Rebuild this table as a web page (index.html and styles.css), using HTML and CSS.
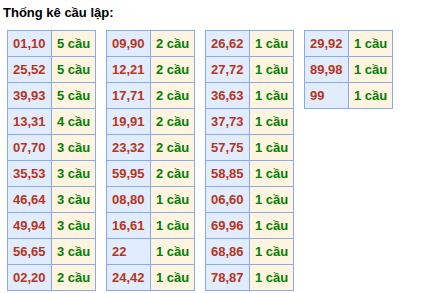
FILE: index.html
```html
<!DOCTYPE html>
<html lang="vi">
<head>
<meta charset="utf-8">
<link rel="stylesheet" href="styles.css">
</head>
<body>
<div class="page">
  <div class="title">Thống kê cầu lập:</div>
  <div class="tables">
    <table class="stat">
      <tr><td class="num">01,10</td><td class="cnt">5 cầu</td></tr>
      <tr><td class="num">25,52</td><td class="cnt">5 cầu</td></tr>
      <tr><td class="num">39,93</td><td class="cnt">5 cầu</td></tr>
      <tr><td class="num">13,31</td><td class="cnt">4 cầu</td></tr>
      <tr><td class="num">07,70</td><td class="cnt">3 cầu</td></tr>
      <tr><td class="num">35,53</td><td class="cnt">3 cầu</td></tr>
      <tr><td class="num">46,64</td><td class="cnt">3 cầu</td></tr>
      <tr><td class="num">49,94</td><td class="cnt">3 cầu</td></tr>
      <tr><td class="num">56,65</td><td class="cnt">3 cầu</td></tr>
      <tr><td class="num">02,20</td><td class="cnt">2 cầu</td></tr>
    </table>
    <table class="stat">
      <tr><td class="num">09,90</td><td class="cnt">2 cầu</td></tr>
      <tr><td class="num">12,21</td><td class="cnt">2 cầu</td></tr>
      <tr><td class="num">17,71</td><td class="cnt">2 cầu</td></tr>
      <tr><td class="num">19,91</td><td class="cnt">2 cầu</td></tr>
      <tr><td class="num">23,32</td><td class="cnt">2 cầu</td></tr>
      <tr><td class="num">59,95</td><td class="cnt">2 cầu</td></tr>
      <tr><td class="num">08,80</td><td class="cnt">1 cầu</td></tr>
      <tr><td class="num">16,61</td><td class="cnt">1 cầu</td></tr>
      <tr><td class="num">22</td><td class="cnt">1 cầu</td></tr>
      <tr><td class="num">24,42</td><td class="cnt">1 cầu</td></tr>
    </table>
    <table class="stat">
      <tr><td class="num">26,62</td><td class="cnt">1 cầu</td></tr>
      <tr><td class="num">27,72</td><td class="cnt">1 cầu</td></tr>
      <tr><td class="num">36,63</td><td class="cnt">1 cầu</td></tr>
      <tr><td class="num">37,73</td><td class="cnt">1 cầu</td></tr>
      <tr><td class="num">57,75</td><td class="cnt">1 cầu</td></tr>
      <tr><td class="num">58,85</td><td class="cnt">1 cầu</td></tr>
      <tr><td class="num">06,60</td><td class="cnt">1 cầu</td></tr>
      <tr><td class="num">69,96</td><td class="cnt">1 cầu</td></tr>
      <tr><td class="num">68,86</td><td class="cnt">1 cầu</td></tr>
      <tr><td class="num">78,87</td><td class="cnt">1 cầu</td></tr>
    </table>
    <table class="stat">
      <tr><td class="num">29,92</td><td class="cnt">1 cầu</td></tr>
      <tr><td class="num">89,98</td><td class="cnt">1 cầu</td></tr>
      <tr><td class="num">99</td><td class="cnt">1 cầu</td></tr>
    </table>
  </div>
</div>
</body>
</html>
```
FILE: styles.css
```css
html, body {
  margin: 0;
  padding: 0;
  background: #ffffff;
}

.page {
  padding: 5px 0 0 3px;
  font-family: "Liberation Sans", Arial, sans-serif;
}

.title {
  font-size: 13px;
  line-height: 15px;
  font-weight: bold;
  color: #000000;
}

.tables {
  display: flex;
  align-items: flex-start;
  gap: 10px;
  margin-top: 10px;
  padding-left: 4px;
}

.stat {
  border-collapse: collapse;
  table-layout: fixed;
  width: 89px;
}

.stat td {
  border: 1px solid #88aaf0;
  height: 26px;
  width: 43px;
  padding: 0 0 0 5px;
  box-sizing: border-box;
  font-size: 13px;
  font-weight: bold;
  line-height: 15px;
  vertical-align: middle;
  text-align: left;
  white-space: nowrap;
  overflow: hidden;
}

.stat .num {
  background: #e1edff;
  color: #b8341a;
}

.stat .cnt {
  background: #fff4e0;
  color: #008000;
}
```
